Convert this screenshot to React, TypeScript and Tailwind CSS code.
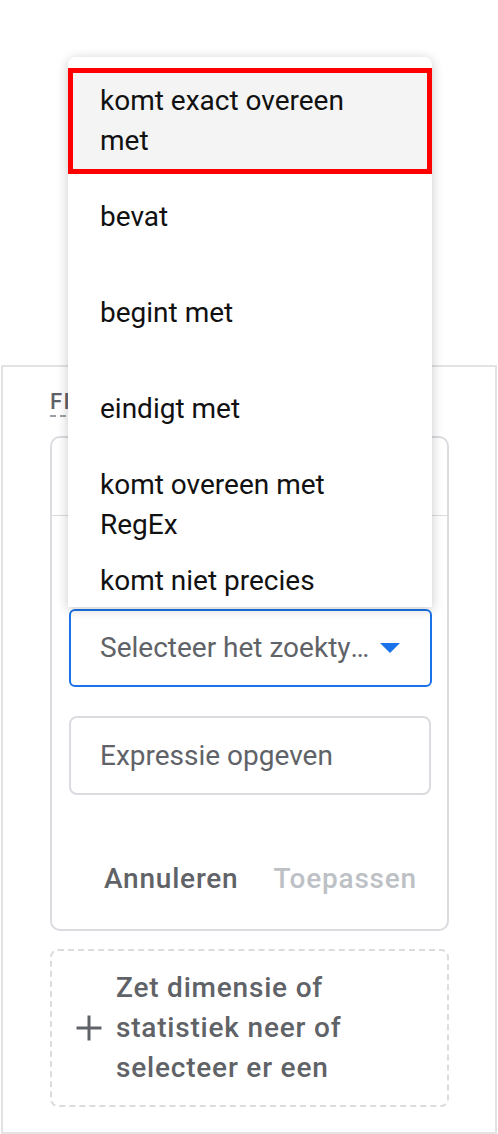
import React from 'react';

const FONT = { fontFamily: 'Roboto, "Noto Sans", Arial, sans-serif' };

const options = [
  'bevat',
  'begint met',
  'eindigt met',
  'komt overeen met RegEx',
  'komt niet precies overeen met',
  'bevat niet',
];

function PlusIcon() {
  return (
    <svg width="28" height="28" viewBox="0 0 28 28" className="shrink-0">
      <path d="M14 1.5v25M1.5 14h25" stroke="#5f6368" strokeWidth="3" />
    </svg>
  );
}

function ArrowDown() {
  return (
    <svg width="20" height="10" viewBox="0 0 20 10" className="shrink-0">
      <path d="M0 0h20L10 10z" fill="#1a73e8" />
    </svg>
  );
}

export default function App() {
  return (
    <div className="relative w-[498px] h-[1134px] bg-white overflow-hidden" style={FONT}>
      <div className="h-[365px]" />

      {/* Filter panel */}
      <div className="ml-px w-[496px] h-[769px] border-2 border-[#e3e3e3] pl-[47px] pt-[21px]">
        <div className="inline-block border-b-2 border-dashed border-[#9aa0a6] text-[22px] leading-[27px] font-medium tracking-[1.5px] text-[#5f6368]">
          FILTER
        </div>

        {/* Condition card */}
        <div className="mt-[19px] w-[399px] h-[495px] border-2 border-[#dadce0] rounded-[10px] flex flex-col">
          <div className="h-[78px] border-b border-[#dadce0]" />
          <div className="flex flex-col pl-[17px] pt-[93px]">
            <div className="w-[363px] h-[78px] border-2 border-[#1a73e8] rounded-[6px] flex items-center pl-[29px] pr-[30px] gap-[8px]">
              <span className="flex-1 truncate text-[28px] leading-[40px] text-[#5f6368]">
                Selecteer het zoektype
              </span>
              <ArrowDown />
            </div>
            <div className="mt-[29px] w-[362px] h-[79px] border-2 border-[#dadce0] rounded-[8px] flex items-center pl-[29px]">
              <span className="text-[28px] leading-[40px] text-[#5f6368]">Expressie opgeven</span>
            </div>
            <div className="mt-[60px] flex justify-end pr-[30px] gap-[35px]">
              <button className="text-[28px] leading-[48px] font-medium tracking-[0.8px] text-[#5f6368]">Annuleren</button>
              <button className="text-[28px] leading-[48px] font-medium tracking-[0.8px] text-[#bdc1c6]">Toepassen</button>
            </div>
          </div>
        </div>

        {/* Drop zone */}
        <div className="mt-[18px] w-[399px] h-[158px] border-2 border-dashed border-[#dadce0] rounded-[8px] flex items-center pl-[23px] gap-[13px]">
          <PlusIcon />
          <div className="text-[28px] leading-[40px] font-medium tracking-[0.8px] text-[#5f6368]">
            Zet dimensie of
            <br />
            statistiek neer of
            <br />
            selecteer er een
          </div>
        </div>
      </div>

      {/* Match type menu */}
      <div className="absolute left-[68px] top-[57px] w-[364px] h-[550px] bg-white rounded-t-[8px] shadow-[0_2px_12px_rgba(0,0,0,0.22)] overflow-hidden pt-[16px]">
        <div className="mx-[5px] h-[96px] bg-[#f4f4f4] ring-[5px] ring-[#ff0000] flex items-center pl-[27px] pr-[40px]">
          <span className="text-[28px] leading-[40px] text-[#111]">komt exact overeen met</span>
        </div>
        {options.map((o) => (
          <div key={o} className="min-h-[96px] flex items-center pl-[32px] pr-[40px]">
            <span className="text-[28px] leading-[40px] text-[#111]">{o}</span>
          </div>
        ))}
      </div>
    </div>
  );
}
